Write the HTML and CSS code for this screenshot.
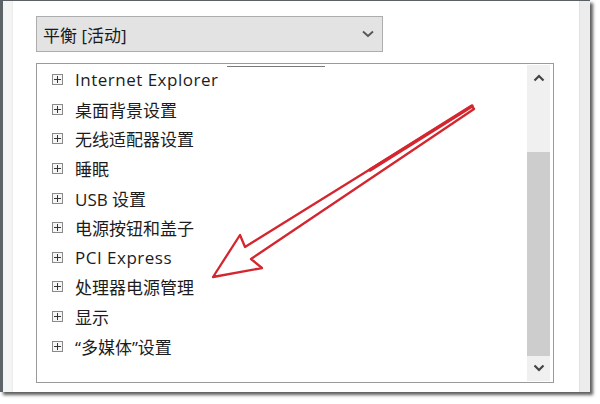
FILE: index.html
```html
<!DOCTYPE html>
<html lang="zh-CN">
<head>
<meta charset="utf-8">
<link rel="stylesheet" href="styles.css">
</head>
<body>
<div class="window">
  <div class="strip-left"></div>
  <div class="content">
    <div class="dropdown">
      <span class="dd-text">平衡 [活动]</span>
      <svg class="dd-chev" width="12" height="8" viewBox="0 0 12 8"><path d="M1 1.5 L6 6 L11 1.5" fill="none" stroke="#555" stroke-width="1.8"/></svg>
    </div>
    <div class="listbox">
      <div class="artifact"></div>
      <ul class="items">
        <li><span class="plus"></span><span class="label latin">Internet Explorer</span></li>
        <li><span class="plus"></span><span class="label">桌面背景设置</span></li>
        <li><span class="plus"></span><span class="label">无线适配器设置</span></li>
        <li><span class="plus"></span><span class="label">睡眠</span></li>
        <li><span class="plus"></span><span class="label">USB 设置</span></li>
        <li><span class="plus"></span><span class="label">电源按钮和盖子</span></li>
        <li><span class="plus"></span><span class="label latin">PCI Express</span></li>
        <li><span class="plus"></span><span class="label">处理器电源管理</span></li>
        <li><span class="plus"></span><span class="label">显示</span></li>
        <li><span class="plus"></span><span class="label">“多媒体”设置</span></li>
      </ul>
      <div class="scrollbar">
        <div class="sb-btn">
          <svg width="12" height="8" viewBox="0 0 12 8"><path d="M1.5 6.5 L6 2 L10.5 6.5" fill="none" stroke="#444" stroke-width="2.2"/></svg>
        </div>
        <div class="sb-track"><div class="sb-thumb"></div></div>
        <div class="sb-btn">
          <svg width="12" height="8" viewBox="0 0 12 8"><path d="M1.5 1.5 L6 6 L10.5 1.5" fill="none" stroke="#444" stroke-width="2.2"/></svg>
        </div>
      </div>
    </div>
  </div>
  <div class="strip-right"></div>
  <svg class="arrow" width="590" height="392" viewBox="0 0 590 392">
    <path d="M472 106 L245 247 L240 235 L213 277 L262 268 L251 259 L474 109 Z" fill="none" stroke="#d3262f" stroke-width="2.3" stroke-linejoin="round"/>
    <path d="M472 106 L370 170" stroke="#d3262f" stroke-width="3.4" stroke-linecap="round"/>
  </svg>
</div>
</body>
</html>
```

FILE: styles.css
```css
html, body {
  margin: 0;
  padding: 0;
  background: #ffffff;
}
body {
  width: 600px;
  height: 404px;
  overflow: hidden;
  font-family: "Open Sans", "Noto Sans CJK SC", sans-serif;
}
.window {
  position: relative;
  width: 587px;
  height: 391px;
  display: flex;
  background: #ffffff;
  border-top: 1px solid #5a5f63;
  border-left: 3px solid #5c6468;
  box-shadow: 3px 3px 3px rgba(40, 40, 40, 0.75);
}
.strip-left {
  width: 9px;
  background: #f3f4f4;
  border-right: 1px solid #ececec;
}
.strip-right {
  width: 10px;
  background: #ececec;
  border-left: 1px solid #e2e2e2;
}
.content {
  flex: 1;
  padding: 15px 25px 0 23px;
  display: flex;
  flex-direction: column;
}
.dropdown {
  height: 34px;
  width: 331px;
  border: 1px solid #adadad;
  background: #e3e3e3;
  display: flex;
  align-items: center;
  justify-content: space-between;
  padding: 0 8px 0 6px;
}
.dd-text {
  font-size: 17px;
  color: #1a1a1a;
}
.dd-chev {
  display: block;
}
.listbox {
  position: relative;
  margin-top: 11px;
  height: 318px;
  border: 1px solid #9a9a9a;
  display: flex;
  padding-right: 3px;
}
.artifact {
  position: absolute;
  left: 190px;
  top: 2px;
  width: 98px;
  height: 1px;
  background: #7a7a7a;
}
.items {
  list-style: none;
  margin: 0;
  padding: 1px 0 0 15px;
  flex: 1;
}
.items li {
  height: 29.6px;
  display: flex;
  align-items: center;
  gap: 12px;
}
.plus {
  position: relative;
  width: 9px;
  height: 9px;
  border: 1px solid #8a8a8a;
  background: #f6f6f6;
  flex: none;
}
.plus::before {
  content: "";
  position: absolute;
  left: 1px;
  top: 4px;
  width: 7px;
  height: 1px;
  background: #333;
}
.plus::after {
  content: "";
  position: absolute;
  left: 4px;
  top: 1px;
  width: 1px;
  height: 7px;
  background: #333;
}
.label {
  font-size: 17px;
  color: #1c1c1c;
  white-space: nowrap;
}
.label.latin {
  letter-spacing: 0.5px;
}
.scrollbar {
  width: 23px;
  margin: 1px 0;
  display: flex;
  flex-direction: column;
  background: #f0f0f0;
}
.sb-btn {
  height: 27px;
  display: flex;
  align-items: center;
  justify-content: center;
}
.sb-track {
  flex: 1;
  padding: 61px 0 0 0;
  display: flex;
  flex-direction: column;
}
.sb-thumb {
  height: 204px;
  background: #cdcdcd;
}
.arrow {
  position: absolute;
  left: -3px;
  top: -1px;
  pointer-events: none;
}
```
